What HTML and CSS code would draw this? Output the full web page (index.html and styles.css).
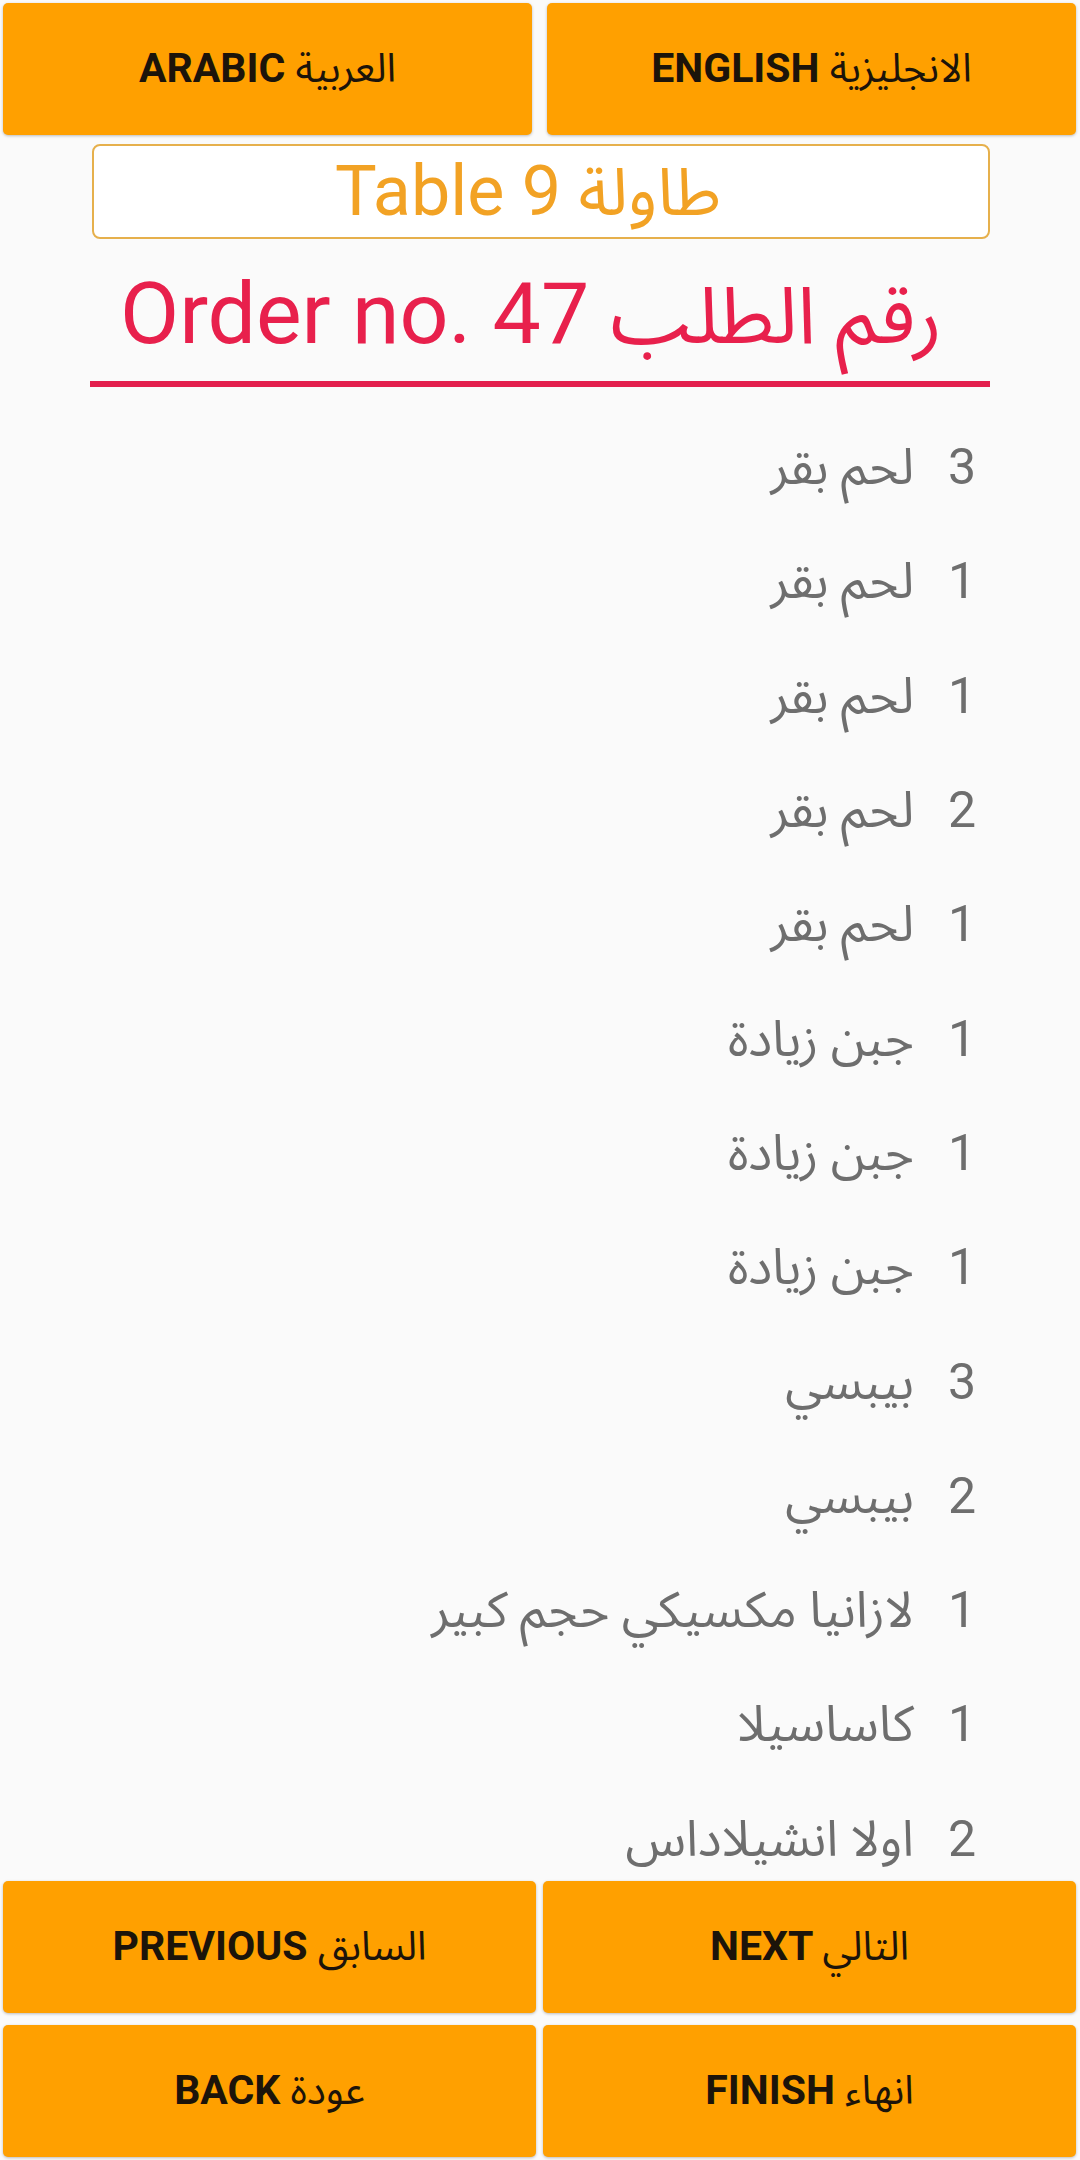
FILE: index.html
```html
<!DOCTYPE html>
<html lang="ar">
  <head>
    <meta charset="UTF-8">
    <meta name="viewport" content="width=device-width, initial-scale=1">
    <title>Order</title>
    <link rel="stylesheet" href="styles.css">
  </head>
  <body>
    <div id="screen">
      <div class="lang-bar">
        <button class="btn" dir="ltr">ARABIC <span class="ar">العربية</span></button>
        <button class="btn" dir="ltr">ENGLISH <span class="ar">الانجليزية</span></button>
      </div>

      <div class="table-box" dir="ltr">Table 9 <span class="ar">طاولة</span></div>
      <div class="order-no" dir="ltr">Order no. 47 <span class="ar">رقم الطلب</span></div>
      <div class="divider"></div>

      <div class="items">
        <div class="item" dir="rtl"><span class="qty">3</span><span class="name">لحم بقر</span></div>
        <div class="item" dir="rtl"><span class="qty">1</span><span class="name">لحم بقر</span></div>
        <div class="item" dir="rtl"><span class="qty">1</span><span class="name">لحم بقر</span></div>
        <div class="item" dir="rtl"><span class="qty">2</span><span class="name">لحم بقر</span></div>
        <div class="item" dir="rtl"><span class="qty">1</span><span class="name">لحم بقر</span></div>
        <div class="item" dir="rtl"><span class="qty">1</span><span class="name">جبن زيادة</span></div>
        <div class="item" dir="rtl"><span class="qty">1</span><span class="name">جبن زيادة</span></div>
        <div class="item" dir="rtl"><span class="qty">1</span><span class="name">جبن زيادة</span></div>
        <div class="item" dir="rtl"><span class="qty">3</span><span class="name">بيبسي</span></div>
        <div class="item" dir="rtl"><span class="qty">2</span><span class="name">بيبسي</span></div>
        <div class="item" dir="rtl"><span class="qty">1</span><span class="name">لازانيا مكسيكي حجم كبير</span></div>
        <div class="item" dir="rtl"><span class="qty">1</span><span class="name">كاساسيلا</span></div>
        <div class="item" dir="rtl"><span class="qty">2</span><span class="name">اولا انشيلاداس</span></div>
      </div>

      <div class="nav-grid">
        <button class="btn" dir="ltr">PREVIOUS <span class="ar">السابق</span></button>
        <button class="btn" dir="ltr">NEXT <span class="ar">التالي</span></button>
        <button class="btn" dir="ltr">BACK <span class="ar">عودة</span></button>
        <button class="btn" dir="ltr">FINISH <span class="ar">انهاء</span></button>
      </div>
    </div>
  </body>
</html>
```

FILE: styles.css
```css
* {
  box-sizing: border-box;
  font-family: Roboto, "Noto Sans Arabic", "DejaVu Sans", sans-serif;
}

body {
  margin: 0;
  background: #fafafa;
}

#screen {
  height: 2160px;
  display: flex;
  flex-direction: column;
}

.btn {
  height: 132px;
  border: none;
  border-radius: 5px;
  background: #ffa000;
  box-shadow: 0 1px 3px rgba(0, 0, 0, 0.25);
  color: #1c140a;
  font-size: 41px;
  font-weight: bold;
  padding: 0;
}

.btn .ar {
  font-weight: normal;
  font-size: 40px;
}

.lang-bar {
  display: grid;
  grid-template-columns: 1fr 1fr;
  gap: 15px;
  padding: 3px 4px 0 3px;
}

.table-box {
  margin: 9px 90px 0 92px;
  padding-right: 26px;
  height: 95px;
  border: 2px solid #e6b04c;
  border-radius: 8px;
  background: #ffffff;
  color: #f2a224;
  font-size: 70px;
  line-height: 91px;
  text-align: center;
}

.table-box .ar {
  font-size: 66px;
}

.order-no {
  margin: 32px 90px 0 92px;
  padding-right: 20px;
  height: 86px;
  color: #e8204c;
  font-size: 86px;
  line-height: 86px;
  text-align: center;
  white-space: nowrap;
}

.order-no .ar {
  font-size: 79px;
}

.divider {
  margin: 24px 90px 0 90px;
  height: 6px;
  background: #e31f4d;
}

.items {
  flex: 1;
  margin-top: 23px;
  overflow: hidden;
}

.item {
  height: 114.3px;
  display: flex;
  align-items: center;
  gap: 34px;
  padding-right: 104px;
  color: #6e6e6e;
  font-size: 50px;
  line-height: 114px;
}

.nav-grid {
  display: grid;
  grid-template-columns: 1fr 1fr;
  column-gap: 7px;
  row-gap: 12px;
  padding: 0 4px 3px 3px;
}
```
